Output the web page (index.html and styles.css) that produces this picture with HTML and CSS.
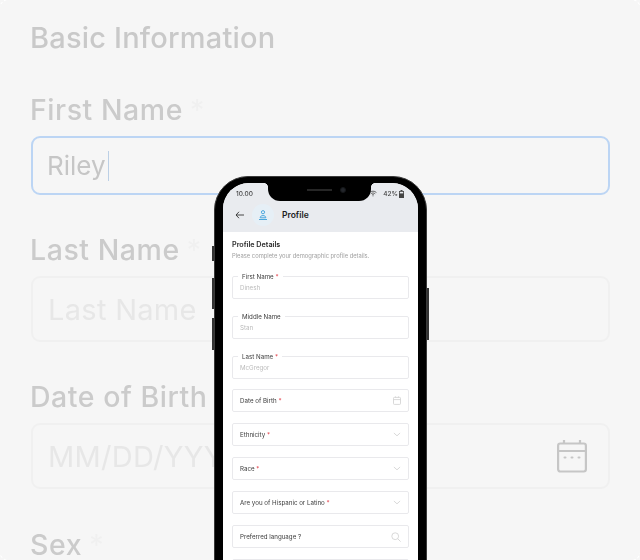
FILE: index.html
```html
<!DOCTYPE html>
<html lang="en">
<head>
  <meta charset="UTF-8" />
  <meta name="viewport" content="width=device-width, initial-scale=1.0"/>
  <title>Profile</title>
  <link rel="stylesheet" href="styles.css">
</head>
<body>
  <div class="stage">
    <!-- Large faded form behind the phone -->
    <div class="form">
      <h1 class="form-title">Basic Information</h1>
      <div class="group">
        <div class="group-label">First Name <span class="star">*</span></div>
        <div class="box box-focus"><span class="box-value">Riley</span><span class="caret"></span></div>
      </div>
      <div class="group">
        <div class="group-label">Last Name <span class="star">*</span></div>
        <div class="box"><span class="box-hint">Last Name</span></div>
      </div>
      <div class="group">
        <div class="group-label">Date of Birth <span class="star">*</span></div>
        <div class="box">
          <span class="box-hint">MM/DD/YYYY</span>
          <svg width="30" height="34" viewBox="0 0 30 34" fill="none" stroke="#c6c6c6" stroke-width="2.2">
            <rect x="1.1" y="4.5" width="27.8" height="28" rx="2.2"/>
            <path d="M1 12h28M7 1v3.5M23 1v3.5"/>
            <path d="M7.6 18.5h.8M14.6 18.5h.8M21.6 18.5h.8" stroke-linecap="round"/>
          </svg>
        </div>
      </div>
      <div class="group group-last">
        <div class="group-label">Sex <span class="star">*</span></div>
      </div>
    </div>

    <!-- Phone mockup -->
    <div class="phone">
      <span class="btn btn-mute"></span>
      <span class="btn btn-up"></span>
      <span class="btn btn-down"></span>
      <span class="btn btn-power"></span>
      <div class="screen">
        <div class="notch"><span class="speaker"></span><span class="camera"></span></div>
        <div class="status">
          <span>10.00</span>
          <span class="status-right">
            <svg class="wifi" width="8" height="7" viewBox="0 0 10 8" fill="none" stroke="#333" stroke-width="0.9">
              <path d="M.7 2.8C3.2.5 6.8.5 9.3 2.8M2.2 4.4c1.7-1.4 3.9-1.4 5.6 0M3.7 5.9c.8-.6 1.8-.6 2.6 0"/>
              <circle cx="5" cy="7.2" r=".5" fill="#333" stroke="none"/>
            </svg>
            <span>42%</span>
            <svg width="5" height="8" viewBox="0 0 5 8"><path d="M1.5 0h2v1h1.5v7H0V1h1.5z" fill="#444"/><rect x=".8" y="1.8" width="3.4" height="1.6" fill="#e9ebef"/></svg>
          </span>
        </div>
        <div class="appbar">
          <svg width="10" height="8" viewBox="0 0 10 8" fill="none" stroke="#333" stroke-width="0.9"><path d="M9 4H1M4 .8 1 4l3 3.2"/></svg>
          <span class="avatar">
            <svg width="10" height="10" viewBox="0 0 10 10" fill="none" stroke="#4ba6dc" stroke-width="1">
              <circle cx="5" cy="2.2" r="1.6"/>
              <path d="M2.2 7.8C2.2 6.4 3.2 5.6 5 5.6s2.8.8 2.8 2.2z"/>
              <path d="M1 9.5h8"/>
            </svg>
          </span>
          <span class="appbar-title">Profile</span>
        </div>
        <div class="content">
          <div class="content-title">Profile Details</div>
          <div class="content-sub">Please complete your demographic profile details.</div>

          <div class="field outlined"><span class="legend">First Name <i>*</i></span><span class="val">Dinesh</span></div>
          <div class="field outlined"><span class="legend">Middle Name</span><span class="val">Stan</span></div>
          <div class="field outlined"><span class="legend">Last Name <i>*</i></span><span class="val">McGregor</span></div>

          <div class="field plain first-plain">
            <span>Date of Birth <i>*</i></span>
            <svg width="8" height="9" viewBox="0 0 8 9" fill="none" stroke="#cfcfcf" stroke-width=".8"><rect x=".5" y="1.4" width="7" height="7" rx=".8"/><path d="M.5 3.6h7M2.5 .4v1M5.5 .4v1"/></svg>
          </div>
          <div class="field plain"><span>Ethnicity <i>*</i></span><svg width="8" height="5" viewBox="0 0 9 5" fill="none" stroke="#c9c9c9" stroke-width=".8"><path d="M1 .8 4.5 4 8 .8"/></svg></div>
          <div class="field plain"><span>Race <i>*</i></span><svg width="8" height="5" viewBox="0 0 9 5" fill="none" stroke="#c9c9c9" stroke-width=".8"><path d="M1 .8 4.5 4 8 .8"/></svg></div>
          <div class="field plain"><span>Are you of Hispanic or Latino <i>*</i></span><svg width="8" height="5" viewBox="0 0 9 5" fill="none" stroke="#c9c9c9" stroke-width=".8"><path d="M1 .8 4.5 4 8 .8"/></svg></div>
          <div class="field plain"><span>Preferred language ?</span><svg width="10" height="10" viewBox="0 0 10 10" fill="none" stroke="#cfcfcf" stroke-width=".8"><circle cx="4.2" cy="4.2" r="3.4"/><path d="M6.8 6.8 9.6 9.6"/></svg></div>
          <div class="field plain"></div>
        </div>
      </div>
    </div>
  </div>
</body>
</html>
```

FILE: styles.css
```css
* {
  box-sizing: border-box;
}

body {
  margin: 0;
  background: #f6f6f6;
  font-family: Inter, "Liberation Sans", sans-serif;
}

.stage {
  position: relative;
  width: 640px;
  height: 560px;
  overflow: hidden;
  background: #f6f6f6;
}

/* faint rounded outline that only shows at the corners */
.stage::before {
  content: "";
  position: absolute;
  top: -1px;
  left: -1px;
  right: -1px;
  bottom: -1px;
  border: 1px dashed #fff;
  border-radius: 10px;
}

/* background form */
.form {
  padding: 20px 30px 0 31px;
  filter: blur(0.4px);
}

.form-title {
  margin: 0 0 36px -1px;
  font-size: 29px;
  line-height: 36px;
  font-weight: 500;
  letter-spacing: 0.2px;
  color: #c9c9c9;
}

.group {
  margin-bottom: 37px;
}

.group-label {
  margin: 0 0 8px -1px;
  font-size: 28.5px;
  line-height: 36px;
  font-weight: 500;
  letter-spacing: 0.55px;
  color: #cbcbcb;
}

.group-last .group-label {
  margin-bottom: 0;
  padding-top: 4px;
  line-height: 30px;
}

.star {
  margin-left: -1px;
  font-weight: 400;
  color: #f0f0f0;
}

.box {
  display: flex;
  align-items: center;
  justify-content: space-between;
  height: 66px;
  padding: 0 21px 0 15px;
  border: 2px solid #f0f0f0;
  border-radius: 9px;
}

.box-focus {
  justify-content: flex-start;
  height: 59px;
  border-color: #bcd5f4;
}

.box-value {
  margin-left: -1px;
  font-size: 26px;
  color: #c6c6c6;
}

.caret {
  width: 1.5px;
  height: 30px;
  margin-left: 2px;
  background: #bcd0e6;
}

.box-hint {
  font-size: 29px;
  letter-spacing: 0.3px;
  color: #e7e7e7;
}

/* phone */
.phone {
  position: absolute;
  left: 214px;
  top: 176px;
  width: 213px;
  height: 420px;
  padding: 6px 8px;
  background: #000;
  border: 1px solid #3a3a3a;
  border-radius: 34px;
}

.btn {
  position: absolute;
  width: 2px;
  background: #333;
}

.btn-mute {
  left: -3px;
  top: 69px;
  height: 15px;
}

.btn-up {
  left: -3px;
  top: 101px;
  height: 31px;
}

.btn-down {
  left: -3px;
  top: 141px;
  height: 32px;
}

.btn-power {
  right: -3px;
  top: 111px;
  height: 52px;
}

.screen {
  position: relative;
  height: 100%;
  overflow: hidden;
  background: #fff;
  border-radius: 26px;
}

.notch {
  position: absolute;
  z-index: 1;
  left: 45px;
  top: 0;
  width: 103px;
  height: 18px;
  display: flex;
  align-items: center;
  justify-content: center;
  gap: 8px;
  padding: 0 0 4px 14px;
  background: #000;
  border-radius: 0 0 12px 12px;
}

/* small concave corners where the notch meets the top edge */
.notch::before,
.notch::after {
  content: "";
  position: absolute;
  top: 0;
  width: 5px;
  height: 5px;
}

.notch::before {
  left: -5px;
  background: radial-gradient(circle at 0 100%, transparent 5px, #000 5.5px);
}

.notch::after {
  right: -5px;
  background: radial-gradient(circle at 100% 100%, transparent 5px, #000 5.5px);
}

.speaker {
  width: 25px;
  height: 1.5px;
  background: #262626;
}

.camera {
  width: 6px;
  height: 6px;
  border-radius: 50%;
  background: #23262b;
  border: 1px solid #15171a;
}

.status {
  display: flex;
  justify-content: space-between;
  align-items: center;
  height: 20px;
  padding: 1px 14px 0 13px;
  background: #e9ebef;
  font-size: 6.5px;
  font-weight: 500;
  color: #444;
  filter: blur(0.25px);
}

.status-right {
  position: relative;
  display: flex;
  align-items: center;
  gap: 1px;
}

.wifi {
  margin-right: 5px;
}

.appbar {
  display: flex;
  align-items: center;
  height: 29px;
  padding: 0 0 5px 12px;
  background: #e9ebef;
}

.avatar {
  display: flex;
  align-items: center;
  justify-content: center;
  width: 22px;
  height: 22px;
  margin-left: 7px;
  border-radius: 50%;
  background: #e6eff6;
}

.appbar-title {
  margin-left: 8px;
  font-size: 8.5px;
  font-weight: 600;
  color: #1c1c1c;
}

.content {
  padding: 8px 9px 0;
  filter: blur(0.25px);
}

.content-title {
  font-size: 7.2px;
  line-height: 10px;
  font-weight: 600;
  color: #2a2a2a;
}

.content-sub {
  margin-top: 2px;
  margin-bottom: 16px;
  font-size: 5.8px;
  line-height: 8px;
  color: #a0a0a0;
}

.field {
  position: relative;
  display: flex;
  align-items: center;
  justify-content: space-between;
  height: 23px;
  padding: 0 7px;
  border: 1px solid #e9e9ec;
  border-radius: 2px;
  font-size: 6.2px;
  color: #3c3c3c;
}

.field i {
  font-style: normal;
  color: #e0303a;
}

.outlined {
  margin-bottom: 17px;
}

.plain {
  margin-bottom: 11px;
}

.first-plain {
  margin-top: -7px;
}

.legend {
  position: absolute;
  left: 5px;
  top: -4px;
  padding: 0 4px;
  background: #fff;
  line-height: 8px;
}

.val {
  color: #bbb;
}
```
